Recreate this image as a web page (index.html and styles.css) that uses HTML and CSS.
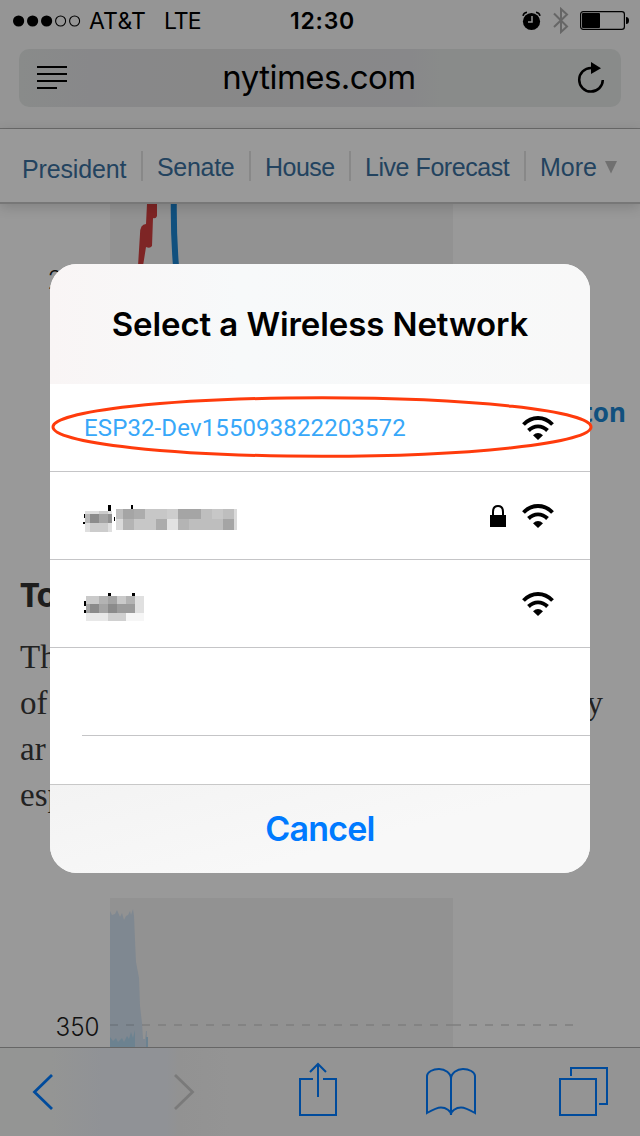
FILE: index.html
```html
<!DOCTYPE html>
<html lang="en">
<head>
<meta charset="utf-8">
<title>Select a Wireless Network</title>
<link rel="stylesheet" href="styles.css">
</head>
<body>
<div class="screen">
  <header class="browser-bar">
    <div class="status">
      <div class="status-left">
        <svg class="signal" width="68" height="12" viewBox="0 0 68 12"><circle cx="5.6" cy="6" r="5.6"/><circle cx="19.6" cy="6" r="5.6"/><circle cx="33.6" cy="6" r="5.6"/><circle class="empty" cx="47.6" cy="6" r="5"/><circle class="empty" cx="61.6" cy="6" r="5"/></svg>
        <span class="carrier">AT&amp;T</span>
        <span class="network">LTE</span>
      </div>
      <div class="clock">12:30</div>
      <div class="status-right">
        <svg width="20" height="20" viewBox="0 0 20 20"><circle cx="9.5" cy="10.5" r="8.6"/><path d="M1 4.8Q1.6 1.8 5 1.3M18 4.8Q17.4 1.8 14 1.3" fill="none" stroke="#000" stroke-width="1.5"/><path d="M10 5v6H6" fill="none" stroke="#959595" stroke-width="1.5"/></svg>
        <svg class="bluetooth" width="16" height="27" viewBox="0 0 16 27"><path d="M1 6.500l13 13-6 5.500v-23l6 5.500-13 12.500"/></svg>
        <svg class="battery" width="50" height="20" viewBox="0 0 50 20"><rect x=".6" y=".6" width="43.8" height="17.8" rx="2.6" fill="none" stroke="#000" stroke-width="1.2"/><rect x="2" y="2" width="18" height="15" rx="1"/><path d="M46 6q3 0 3 3.500T46 13z"/></svg>
      </div>
    </div>
    <div class="address">
      <svg width="30" height="24" viewBox="0 0 30 24"><path d="M0 1h30M0 8h30M0 15h30M0 22h20" stroke="#000" stroke-width="2"/></svg>
      <span class="host">nytimes.com</span>
      <svg width="28" height="32" viewBox="0 0 28 32"><path d="M14 6A11.800 11.800 0 1 0 25.800 18" fill="none" stroke="#000" stroke-width="2.500"/><path d="M14 0l10 6.300-10 5.700z"/></svg>
    </div>
  </header>
  <nav class="site-nav">
    <a class="president">President</a><a class="senate">Senate</a><a class="house">House</a><a class="live">Live Forecast</a><a class="more">More</a>
    <svg class="caret" width="12" height="13" viewBox="0 0 12 13"><path d="M0 0h12L6 12.500z"/></svg>
  </nav>
  <main class="article">
    <svg class="chart-top" width="640" height="94" viewBox="0 0 640 94">
      <rect x="110" y="0" width="343" height="94" fill="#929292"/>
      <path d="M147 0h10v12q-1 3-4 2l-1 28q-2 3-6 1L143 62h-5l2-32q0-10 6-10z" fill="#7e2525"/>
      <path d="M173.800-1Q173.500 32 176 62" fill="none" stroke="#11507e" stroke-width="6"/>
      <text x="47.500" y="85" font-size="25">270</text>
    </svg>
    <div class="candidate">Clinton</div>
    <h2>To</h2>
    <p>Th<br>of<span class="line-end">y</span><br>ar<br>esp</p>
    <svg class="chart-bottom" width="640" height="149" viewBox="0 0 640 149">
      <rect x="110" y="0" width="343" height="149" fill="#929292"/>
      <path d="M110 149V13l2 4 3-1 2-4 3 7 2-4 2 7 2-4 2-1 2-4 1 4 2-6 1 7 1 24 1 22 3 16 1 28 2 17 1 16h2l1-8 1 0v17z" fill="#7f8891"/>
      <path d="M110 149v-10l3 4 3-3 2 4 4-4 2 4 3-6 2 3 2-7 2 6 2-8v17zM146 149v-10h2v10z" fill="#6c8290"/>
      <path d="M110 127h343" stroke="#000" stroke-opacity=".1" stroke-width="2" stroke-dasharray="8 8"/><path d="M453 127h122" stroke="#858585" stroke-width="2" stroke-dasharray="8 8"/>
      <text x="55.500" y="138" font-size="25" textLength="44" lengthAdjust="spacingAndGlyphs">350</text>
    </svg>
  </main>
  <footer class="toolbar">
    <svg width="640" height="88" viewBox="0 0 640 88">
      <path class="chevron" d="M52 27L34.500 44 52 61"/>
      <path class="chevron disabled" d="M175 27l17.500 17L175 61"/>
      <path d="M313 31h-13v36h36V31h-13M318 49V17M310 24l8-8 8 8"/>
      <path d="M451 67V31C451 25 445 21 439 21 433 21 427 24 427 28V65C434 61 437 59.500 441 59.500 446 59.500 451 63 451 67 451 63 456 59.500 461 59.500 465 59.500 468 61 475 65V28C475 24 469 21 463 21 457 21 451 25 451 31"/>
      <path d="M560 31h36v36h-36zM571 28v-8h36v36h-8"/>
    </svg>
  </footer>

  <section class="dialog">
    <h1>Select a Wireless Network</h1>
    <div class="networks">
      <div class="row"><span class="ssid">ESP32-Dev155093822203572</span><svg class="wifi" width="32" height="24" viewBox="0 0 32 24"><use href="#wifi-mark"/></svg></div>
      <div class="row">
        <svg class="redacted" width="170" height="40" viewBox="0 0 510 120" shape-rendering="crispEdges">
          <path d="M85 15h7v20h-7zM153 15h7v20h-7zM12 42h4v12h-4zM10 66h6v7h-6zM102 50h3v14h-3z"/>
          <g transform="translate(15 33)"><path fill="#dfdfdf" d="M0 0h81v63H0z"/><path fill="#b8b8b8" d="M0 9h15v27H0z"/><path fill="#8c8c8c" d="M15 9h27v27H15z"/><path fill="#a5a5a5" d="M42 9h27v27H42z"/><path fill="#919191" d="M69 9h12v27H69z"/><path fill="#ccc" d="M15 36h54v27H15zM42 0h27v9H42z"/></g>
          <g transform="translate(108 27)"><path fill="#bebebe" d="M0 0h363v63H0z"/><path fill="#a5a5a5" d="M21 0h33v30H21zM186 0h69v30h-69zM321 30h33v33h-33z"/><path fill="#acacac" d="M54 0h33v30H54zM120 30h33v33h-33z"/><path fill="#b4b4b4" d="M21 30h33v33H21zM186 30h33v33h-33z"/><path fill="#c7c7c7" d="M87 0h66v30H87zM54 30h66v33H54zM288 0h33v30h-33z"/><path fill="#cdcdcd" d="M153 0h33v30h-33z"/><path fill="#e2e2e2" d="M153 30h33v33h-33z"/><path fill="#dadada" d="M0 30h21v33H0zM354 0h9v63h-9z"/></g>
        </svg>
        <svg class="lock" width="16" height="22" viewBox="0 0 16 22"><path d="M0 10h16v12H0z"/><path d="M3 11V7q0-6 5-6t5 6v4" fill="none" stroke="#000" stroke-width="2"/></svg>
        <svg class="wifi" width="32" height="24" viewBox="0 0 32 24"><use href="#wifi-mark"/></svg>
      </div>
      <div class="row">
        <svg class="redacted" width="170" height="40" viewBox="0 264 510 120" shape-rendering="crispEdges">
          <path d="M85 279h7v12h-7zM157 279h7v12h-7zM12 302h6v16h-6zM11 330h7v9h-7z"/>
          <g transform="translate(18 288)"><path fill="#cacaca" d="M0 0h147v24H0z"/><path fill="#b3b3b3" d="M39 0h27v24H39zM120 0h27v24h-27z"/><path fill="#a4a4a4" d="M66 0h27v24H66zM0 24h147v27H0z"/><path fill="#8b8b8b" d="M12 24h27v27H12zM66 24h27v27H66z"/><path fill="#9c9c9c" d="M93 24h54v27H93z"/><path fill="#e0e0e0" d="M147 0h27v51h-27z"/><path fill="#e8e8e8" d="M0 51h66v24H0z"/><path fill="#d0d0d0" d="M66 51h54v24H66z"/><path fill="#f6f6f6" d="M120 51h54v24h-54z"/></g>
        </svg>
        <svg class="wifi" width="32" height="24" viewBox="0 0 32 24"><g id="wifi-mark"><path d="M1.500 8.500C10-.2 22-.2 30.500 8.500M6.500 14.500c5.500-5.500 13.500-5.500 19 0" fill="none" stroke="#000" stroke-width="3.900"/><path d="M11 19.300q5-4.600 10 0l-5 4.700z"/></g></svg>
      </div>
      <div class="row blank"></div>
    </div>
    <button class="cancel">Cancel</button>
    <svg class="ring" width="542" height="64" viewBox="0 0 542 64"><ellipse cx="271" cy="32" rx="269" ry="29.200"/></svg>
  </section>
</div>
</body>
</html>
```
FILE: styles.css
```css
* { box-sizing: border-box; }
body { margin: 0; }
svg { display: block; flex: none; }
.screen {
  position: relative;
  width: 640px;
  height: 1136px;
  overflow: hidden;
  display: flex;
  flex-direction: column;
  background: #999;
  font-family: Inter, "Liberation Sans", sans-serif;
}
.browser-bar {
  flex: none;
  height: 129px;
  background: #959595;
  border-bottom: 1px solid #6b6b6b;
}
.status {
  display: grid;
  grid-template-columns: 1fr 70px 1fr;
  align-items: center;
  height: 41px;
  padding: 0 11px 0 13px;
}
.status-left { display: flex; align-items: center; font-size: 23px; font-weight: 400; }
.carrier { width: 75px; margin-left: 8px; letter-spacing: .2px; }
.network { letter-spacing: -1px; }
.clock { padding-left: 3px; font-size: 23px; font-weight: 600; letter-spacing: .8px; text-align: center; white-space: nowrap; }
.status-right { display: flex; align-items: center; justify-content: flex-end; }
.bluetooth { margin: 0 11px 0 11px; fill: none; stroke: #666; stroke-width: 2; }
.battery { margin-right: -1px; }
.signal .empty { fill: none; stroke: #000; stroke-width: 1.1; }
.address {
  display: flex;
  align-items: center;
  justify-content: space-between;
  height: 58px;
  margin: 8px 19px 0;
  padding: 0 16px 0 18px;
  border-radius: 10px;
  background: linear-gradient(90deg, #898b8a, #88888a 12%, #888 30%, #88888a 65%, #898b8a 70%);
}
.host { margin-right: 6px; font-size: 33px; line-height: 57px; height: 58px; letter-spacing: -.55px; }
.site-nav {
  flex: none;
  position: relative;
  z-index: 1;
  display: flex;
  align-items: center;
  height: 75px;
  padding: 0 0 0 22px;
  border-bottom: 2px solid #777;
  background: #999;
  box-shadow: 0 3px 12px rgba(0, 0, 0, .16);
  color: #23435f;
  font: 25px/32px "Liberation Sans", sans-serif;
  letter-spacing: -.3px;
  white-space: nowrap;
}
.site-nav a { height: 30px; border-left: 2px solid #888; padding-left: 14px; }
.site-nav .president { width: 119px; border: 0; padding: 2px 0 0; letter-spacing: -.15px; }
.site-nav .senate { width: 108px; }
.site-nav .house { width: 100px; letter-spacing: -.5px; }
.site-nav .live { width: 175px; letter-spacing: -.45px; }
.site-nav .more { width: 81px; letter-spacing: 0; }
.caret { margin-top: 3px; fill: #707070; }
.article { flex: 1; min-height: 0; overflow: hidden; }
.article text { fill: #111; font-family: Inter, sans-serif; font-weight: 300; }
.candidate {
  padding: 96px 14px 0 0;
  height: 134px;
  color: #11507e;
  text-align: right;
  font: bold 26px/36px "Noto Sans", sans-serif;
}
h2 { margin: 142px 0 0 20px; height: 44px; font: bold 34px/40px "Noto Sans", sans-serif; letter-spacing: -1px; color: #1d1d1d; }
.article p {
  margin: 16px 37px 0 20px;
  height: 184px;
  color: #222;
  font: 33px/46px "Liberation Serif", serif;
}
.line-end { float: right; }
.chart-bottom { margin-top: 80px; }
.toolbar { flex: none; height: 89px; border-top: 1px solid #666; background: linear-gradient(90deg, #949594 8%, #909296 16%, #909296 26%, #929292 28%, #949494 36%); }
.toolbar path { fill: none; stroke: #004b9c; stroke-width: 2; }
.toolbar .chevron { stroke-width: 2.8; }
.toolbar .disabled { stroke: #7a7a7a; }
.dialog {
  position: absolute;
  z-index: 2;
  left: 50px;
  top: 264px;
  width: 540px;
  height: 609px;
  border-radius: 27px;
  background: #fff;
}
h1 {
  margin: 0;
  height: 120px;
  border-radius: 27px 27px 0 0;
  background: linear-gradient(90deg, #f9f5f5, #f7f9fa 35%, #f8f8f8);
  text-align: center;
  font-size: 33px;
  line-height: 120px;
  font-weight: 600;
  letter-spacing: -.1px;
  white-space: nowrap;
}
.row {
  display: flex;
  align-items: center;
  height: 88px;
  padding: 0 36px 0 34px;
  border-bottom: 1px solid #c5c5c7;
}
.ssid { font: 24px/30px Roboto, sans-serif; letter-spacing: .12px; color: #38a8f9; }
.wifi { margin-left: auto; }
.lock { margin-left: auto; }
.lock + .wifi { margin-left: 16px; }
.redacted { margin: 8px 0 0 -4px; }
.blank { margin-left: 32px; padding: 0; }
.cancel {
  display: block;
  width: 100%;
  height: 89px;
  margin-top: 48px;
  padding: 0;
  border: 0;
  border-top: 1px solid #c8c8c8;
  border-radius: 0 0 27px 27px;
  background: linear-gradient(165deg, #f3f3f3, #f8f8f8 60%);
  color: #007aff;
  font: 600 34px/88px Inter, sans-serif;
  letter-spacing: -.8px;
}
.ring { position: absolute; left: 1px; top: 131px; fill: none; stroke: #ff3b0c; stroke-width: 3; }
```
